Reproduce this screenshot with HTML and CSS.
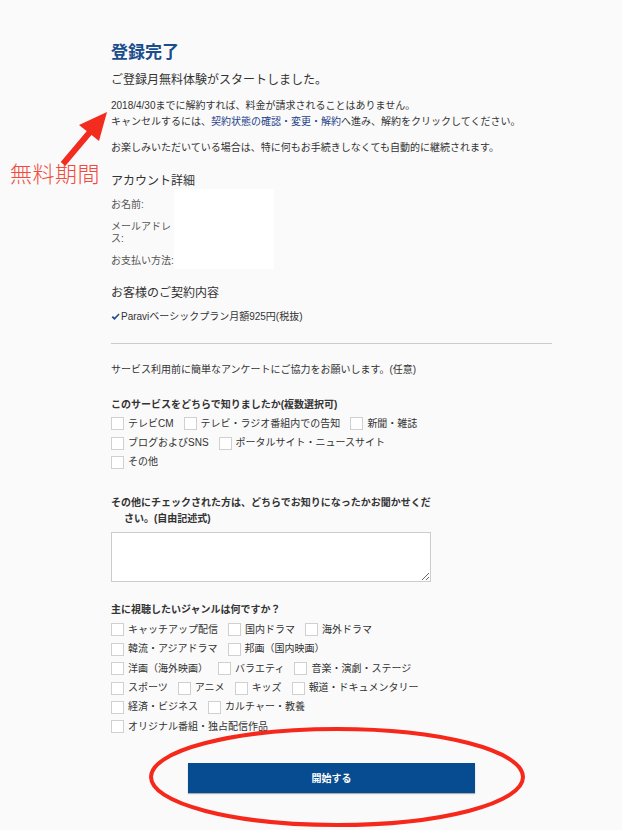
FILE: index.html
```html
<!DOCTYPE html>
<html lang="ja">
<head>
    <meta charset="UTF-8">
    <meta name="viewport" content="width=device-width, initial-scale=1.0">
    <title>登録完了</title>
    <link rel="stylesheet" href="styles.css">
</head>
<body>

<div class="page">
    <h1>登録完了</h1>
    <p class="lead">ご登録月無料体験がスタートしました。</p>
    <p class="note">2018/4/30までに解約すれば、料金が請求されることはありません。<br>キャンセルするには、<a href="#">契約状態の確認・変更・解約</a>へ進み、解約をクリックしてください。</p>
    <p class="note note-2">お楽しみいただいている場合は、特に何もお手続きしなくても自動的に継続されます。</p>

    <h2 class="section-title">アカウント詳細</h2>
    <div class="account">
        <div class="account-labels">
            <div class="account-label">お名前:</div>
            <div class="account-label">メールアドレス:</div>
            <div class="account-label">お支払い方法:</div>
        </div>
        <div class="account-values"></div>
    </div>

    <h2 class="section-title contract">お客様のご契約内容</h2>
    <p class="plan"><svg class="check" width="9" height="8" viewBox="0 0 9 8"><path d="M0.6 4.2 L2 2.9 L3.5 4.6 L7.6 0.4 L8.6 1.5 L3.5 7 Z" fill="#1d4f90"/></svg>Paraviベーシックプラン月額925円(税抜)</p>

    <hr>

    <p class="survey-intro">サービス利用前に簡単なアンケートにご協力をお願いします。(任意)</p>

    <p class="question">このサービスをどちらで知りましたか(複数選択可)</p>
    <div class="options">
        <div class="option-row">
            <label class="option"><input type="checkbox">テレビCM</label>
            <label class="option"><input type="checkbox">テレビ・ラジオ番組内での告知</label>
            <label class="option"><input type="checkbox">新聞・雑誌</label>
        </div>
        <div class="option-row">
            <label class="option"><input type="checkbox">ブログおよびSNS</label>
            <label class="option"><input type="checkbox">ポータルサイト・ニュースサイト</label>
        </div>
        <div class="option-row">
            <label class="option"><input type="checkbox">その他</label>
        </div>
    </div>

    <p class="question hang">その他にチェックされた方は、どちらでお知りになったかお聞かせください。(自由記述式)</p>
    <textarea class="free-text"></textarea>

    <p class="question genre">主に視聴したいジャンルは何ですか？</p>
    <div class="options genre-options">
        <div class="option-row">
            <label class="option"><input type="checkbox">キャッチアップ配信</label>
            <label class="option"><input type="checkbox">国内ドラマ</label>
            <label class="option"><input type="checkbox">海外ドラマ</label>
        </div>
        <div class="option-row">
            <label class="option"><input type="checkbox">韓流・アジアドラマ</label>
            <label class="option"><input type="checkbox">邦画（国内映画）</label>
        </div>
        <div class="option-row">
            <label class="option"><input type="checkbox">洋画（海外映画）</label>
            <label class="option"><input type="checkbox">バラエティ</label>
            <label class="option"><input type="checkbox">音楽・演劇・ステージ</label>
        </div>
        <div class="option-row">
            <label class="option"><input type="checkbox">スポーツ</label>
            <label class="option"><input type="checkbox">アニメ</label>
            <label class="option"><input type="checkbox">キッズ</label>
            <label class="option"><input type="checkbox">報道・ドキュメンタリー</label>
        </div>
        <div class="option-row">
            <label class="option"><input type="checkbox">経済・ビジネス</label>
            <label class="option"><input type="checkbox">カルチャー・教養</label>
        </div>
        <div class="option-row">
            <label class="option"><input type="checkbox">オリジナル番組・独占配信作品</label>
        </div>
    </div>

    <button class="start">開始する</button>
</div>

<!-- red annotations drawn over the screenshot -->
<div class="annotation-label">無料期間</div>
<svg class="annotation" width="622" height="830" viewBox="0 0 622 830">
    <line x1="63" y1="164" x2="90" y2="132" stroke="#f22c1f" stroke-width="6"/>
    <polygon points="107,112 79,125 99,141" fill="#f22c1f"/>
    <ellipse cx="337" cy="777" rx="186" ry="48" fill="none" stroke="#f5281b" stroke-width="4"/>
</svg>

</body>
</html>
```

FILE: styles.css
```css
body {
    margin: 0;
    min-height: 830px;
    position: relative;
    background-color: #fafafa;
    color: #333;
    font-family: "Liberation Sans", "Noto Sans CJK JP", sans-serif;
    font-size: 10px;
    line-height: 16px;
}
.page {
    width: 441px;
    margin-left: 111px;
    padding-top: 43px;
}
h1 {
    margin: 0;
    font-size: 17px;
    line-height: 20px;
    font-weight: bold;
    color: #1a4d8c;
}
p {
    margin: 0;
}
.lead {
    margin-top: 8px;
    font-size: 12px;
    line-height: 18px;
}
.note {
    margin-top: 9px;
}
.note a {
    color: #1f4389;
    text-decoration: none;
}
.note-2 {
    margin-top: 10px;
}
.section-title {
    margin: 17px 0 0;
    font-size: 12px;
    line-height: 16px;
    font-weight: normal;
}
.section-title.contract {
    margin-top: 16px;
}
.account {
    display: flex;
    height: 80px;
}
.account-labels {
    width: 63px;
    padding-top: 10px;
    color: #555;
    line-height: 12px;
}
.account-label {
    margin-bottom: 10px;
}
.account-values {
    width: 100px;
    background-color: #fff;
}
.plan {
    margin-top: 8px;
    display: flex;
    align-items: center;
}
.check {
    margin-right: 1px;
}
hr {
    margin: 18px 0 0;
    height: 0;
    border: 0;
    border-top: 1px solid #ccc;
}
.survey-intro {
    margin-top: 18px;
}
.question {
    margin-top: 19px;
    font-weight: bold;
}
.question.hang {
    margin-top: 23px;
    width: 312px;
    padding-left: 13px;
    text-indent: -13px;
}
.question.genre {
    margin-top: 20px;
}
.options {
    margin-top: 1px;
}
.genre-options {
    margin-top: 2px;
}
.option-row {
    display: flex;
    align-items: center;
    height: 19.4px;
}
.option {
    display: flex;
    align-items: center;
    margin-right: 10px;
    white-space: nowrap;
}
.option input {
    appearance: none;
    -webkit-appearance: none;
    width: 13px;
    height: 13px;
    margin: 0 4px 0 0;
    border: 1px solid #d0d0d0;
    border-radius: 0;
    background-color: #fff;
}
.free-text {
    display: block;
    box-sizing: border-box;
    width: 320px;
    height: 50px;
    margin-top: 5px;
    border: 1px solid #ccc;
    background-color: #fff;
}
.start {
    display: block;
    width: 287px;
    height: 30px;
    margin: 26px 0 0 77px;
    border: none;
    border-radius: 0;
    background-color: #074b90;
    color: #fff;
    font-family: inherit;
    font-size: 10px;
    font-weight: bold;
    box-shadow: 0 1px 1px rgba(0, 0, 0, 0.3);
    cursor: pointer;
}
.annotation-label {
    position: absolute;
    left: 10px;
    top: 164px;
    font-size: 22px;
    line-height: 22px;
    font-weight: 300;
    letter-spacing: 0.5px;
    color: #f24a3e;
}
.annotation {
    position: absolute;
    left: 0;
    top: 0;
    pointer-events: none;
}
```
